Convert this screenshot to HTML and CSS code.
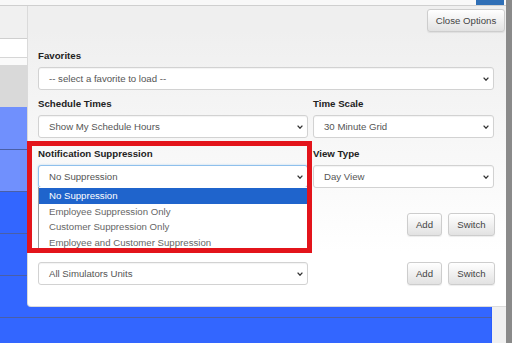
FILE: index.html
```html
<!DOCTYPE html>
<html lang="en">
  <head>
    <meta charset="UTF-8" />
    <meta name="viewport" content="width=device-width, initial-scale=1.0" />
    <title>Schedule Options</title>
    <link rel="stylesheet" href="styles.css">
  </head>
  <body>
    <div class="window">
      <div class="topbar">
        <div class="topbar-tab"></div>
      </div>

      <div class="page">
        <!-- calendar behind the options panel -->
        <div class="calendar">
          <div class="cal-toolbar"></div>
          <div class="cal-head"></div>
          <div class="cal-sub"></div>
          <div class="cal-row cal-gray"></div>
          <div class="cal-row cal-light"></div>
          <div class="cal-row cal-light cal-line"></div>
          <div class="cal-row cal-blue cal-line"></div>
          <div class="cal-row cal-blue cal-line"></div>
          <div class="cal-row cal-blue cal-line"></div>
          <div class="cal-row cal-blue cal-line"></div>
        </div>

        <!-- Options panel -->
        <div class="options">
          <div class="options-head">
            <button class="btn btn-close">Close Options</button>
          </div>

          <div class="field">
            <label>Favorites</label>
            <div class="select">
              <span>-- select a favorite to load --</span>
              <svg class="chevron" width="6" height="4" viewBox="0 0 6 4"><polyline points="0.6,0.6 3,3.2 5.4,0.6" /></svg>
            </div>
          </div>

          <div class="field-row gap-8">
            <div class="field">
              <label>Schedule Times</label>
              <div class="select">
                <span>Show My Schedule Hours</span>
                <svg class="chevron" width="6" height="4" viewBox="0 0 6 4"><polyline points="0.6,0.6 3,3.2 5.4,0.6" /></svg>
              </div>
            </div>
            <div class="field">
              <label>Time Scale</label>
              <div class="select">
                <span>30 Minute Grid</span>
                <svg class="chevron" width="6" height="4" viewBox="0 0 6 4"><polyline points="0.6,0.6 3,3.2 5.4,0.6" /></svg>
              </div>
            </div>
          </div>

          <div class="field-row gap-10">
            <div class="field">
              <label>Notification Suppression</label>
              <div class="select select-open">
                <span>No Suppression</span>
                <svg class="chevron" width="6" height="4" viewBox="0 0 6 4"><polyline points="0.6,0.6 3,3.2 5.4,0.6" /></svg>
                <ul class="dropdown">
                  <li class="active">No Suppression</li>
                  <li>Employee Suppression Only</li>
                  <li>Customer Suppression Only</li>
                  <li>Employee and Customer Suppression</li>
                </ul>
              </div>
            </div>
            <div class="field">
              <label>View Type</label>
              <div class="select">
                <span>Day View</span>
                <svg class="chevron" width="6" height="4" viewBox="0 0 6 4"><polyline points="0.6,0.6 3,3.2 5.4,0.6" /></svg>
              </div>
            </div>
          </div>

          <div class="field-row gap-25">
            <div></div>
            <div class="btn-group">
              <button class="btn btn-add">Add</button>
              <button class="btn btn-switch">Switch</button>
            </div>
          </div>

          <div class="field-row gap-26">
            <div class="select">
              <span>All Simulators Units</span>
              <svg class="chevron" width="6" height="4" viewBox="0 0 6 4"><polyline points="0.6,0.6 3,3.2 5.4,0.6" /></svg>
            </div>
            <div class="btn-group">
              <button class="btn btn-add">Add</button>
              <button class="btn btn-switch">Switch</button>
            </div>
          </div>
        </div>

        <!-- highlight frame drawn on the screenshot -->
        <div class="highlight"></div>
      </div>
    </div>
    <div class="scrollbar"></div>
  </body>
</html>
```

FILE: styles.css
```css
html,
body {
  margin: 0;
  padding: 0;
}
body {
  display: flex;
  width: 512px;
  height: 343px;
  overflow: hidden;
  font-family: "Liberation Sans", Arial, sans-serif;
  font-size: 9.65px;
  background-color: #f0f0f0;
}
.window {
  flex: 1;
  display: flex;
  flex-direction: column;
}
.scrollbar {
  width: 6px;
  background-color: #8a8a8a;
}

/* top strip */
.topbar {
  height: 6px;
  background-color: #f8f8f8;
  border-bottom: 1px solid #cfcfcf;
  display: flex;
  justify-content: flex-end;
}
.topbar-tab {
  width: 28px;
  height: 5px;
  margin-right: 2px;
  background-color: #2f6fb6;
}

.page {
  flex: 1;
  position: relative;
  background-color: #f0f0f0;
}

/* calendar underneath */
.calendar {
  width: 492px;
}
.cal-toolbar {
  height: 32px;
}
.cal-head {
  height: 18px;
  background-color: #fff;
  border-top: 1px solid #cfcfcf;
  border-bottom: 1px solid #d6d6d6;
}
.cal-sub {
  height: 7px;
  background-color: #fafafa;
}
.cal-row {
  height: 42px;
  box-sizing: border-box;
}
.cal-line {
  border-top: 1px solid #4a5fa6;
}
.cal-gray {
  background-color: #d9d9d9;
}
.cal-light {
  background-color: #7090fd;
}
.cal-blue {
  background-color: #3366ff;
  border-right: 1px solid #2a5cff;
}

/* options panel */
.options {
  position: absolute;
  top: 0;
  left: 27px;
  right: 0;
  height: 301px;
  box-sizing: border-box;
  padding: 3px 12px 0 10px;
  background: linear-gradient(#efefef 8%, #fff 82%);
  border-left: 1px solid #dadada;
  border-bottom: 1px solid #dcdcdc;
  border-bottom-left-radius: 4px;
}
.options-head {
  display: flex;
  justify-content: flex-end;
  margin-right: -11px;
  margin-bottom: 18px;
}

.field-row {
  display: grid;
  grid-template-columns: 270px 181px;
  column-gap: 5px;
}
.gap-8 {
  margin-top: 8px;
}
.gap-10 {
  margin-top: 10px;
}
.gap-25 {
  margin-top: 25px;
}
.gap-26 {
  margin-top: 26px;
}

label {
  display: block;
  font-weight: bold;
  font-size: 9.7px;
  line-height: 12px;
  color: #222;
  margin-bottom: 5px;
}

.select {
  position: relative;
  display: flex;
  align-items: center;
  justify-content: space-between;
  height: 23px;
  box-sizing: border-box;
  padding: 0 4px 0 10px;
  background-color: #fff;
  border: 1px solid #d2d2d2;
  border-radius: 3px;
  box-shadow: inset 0 1px 1px rgba(0, 0, 0, 0.05);
  color: #555;
}
.select-open {
  border-color: #8fc0ec;
  box-shadow: 0 0 2px rgba(102, 175, 233, 0.5);
}
.chevron {
  fill: none;
  stroke: #333;
  stroke-width: 1.3;
}

.dropdown {
  position: absolute;
  top: 100%;
  left: -1px;
  right: -1px;
  margin: 0;
  padding: 1px 0 0;
  list-style: none;
  background-color: #fff;
  border: 1px solid #9a9a9a;
  border-top: none;
  z-index: 5;
}
.dropdown li {
  height: 15.6px;
  line-height: 15.6px;
  padding-left: 10px;
  color: #666;
}
.dropdown li.active {
  background-color: #1f64cc;
  color: #fff;
}

/* buttons */
.btn-group {
  display: flex;
  justify-content: flex-end;
  gap: 6px;
  margin-right: -1px;
}
.btn {
  height: 23px;
  padding: 0;
  font-family: inherit;
  font-size: 9.65px;
  color: #444;
  background: linear-gradient(#fff, #e2e2e2);
  border: 1px solid #cdcdcd;
  border-radius: 3px;
  box-shadow: 0 1px 1px rgba(0, 0, 0, 0.07);
}
.btn-close {
  width: 78px;
}
.btn-add {
  width: 35px;
}
.btn-switch {
  width: 47px;
}

/* red annotation frame */
.highlight {
  position: absolute;
  left: 27px;
  top: 135px;
  width: 285px;
  height: 112px;
  box-sizing: border-box;
  border: 5px solid #e3141b;
  z-index: 10;
}
```
